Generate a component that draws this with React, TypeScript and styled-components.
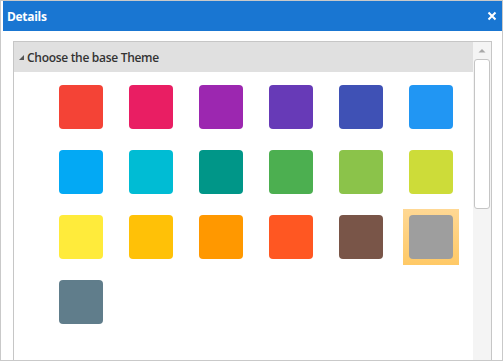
import React from "react";
import styled, { createGlobalStyle } from "styled-components";

const GlobalStyle = createGlobalStyle`
  html, body {
    margin: 0;
    padding: 0;
    background: #fff;
  }
  body {
    font-family: "Open Sans", "Liberation Sans", sans-serif;
  }
`;

const themes = [
  "#f44336", "#e91e63", "#9c27b0", "#673ab7", "#3f51b5", "#2196f3",
  "#03a9f4", "#00bcd4", "#009688", "#4caf50", "#8bc34a", "#cddc39",
  "#ffeb3b", "#ffc107", "#ff9800", "#ff5722", "#795548", "#9e9e9e",
  "#607d8b",
];

const selectedTheme = "#9e9e9e";

const Window = styled.div`
  width: 503px;
  height: 361px;
  box-sizing: border-box;
  border: 1px solid #c9c9c9;
  background: #fff;
  display: flex;
  flex-direction: column;
  overflow: hidden;
`;

const TitleBar = styled.div`
  height: 30px;
  flex: none;
  margin-left: 2px;
  padding: 0 5px 0 4px;
  background: #1976d2;
  color: #fff;
  display: flex;
  align-items: center;
  justify-content: space-between;
`;

const Title = styled.span`
  font-size: 12px;
  font-weight: 700;
  letter-spacing: -0.3px;
`;

const CloseButton = styled.button`
  border: 0;
  padding: 0;
  background: transparent;
  width: 10px;
  height: 10px;
  display: flex;
  cursor: pointer;
`;

const Body = styled.div`
  flex: 1;
  padding: 10px 10px 0 12px;
  display: flex;
  min-height: 0;
`;

const Panel = styled.div`
  flex: 1;
  border: 1px solid #c6c6c6;
  border-bottom: none;
  display: flex;
  min-height: 0;
`;

const Content = styled.div`
  flex: 1;
  display: flex;
  flex-direction: column;
`;

const SectionHeader = styled.div`
  height: 30px;
  background: #e0e0e0;
  display: flex;
  align-items: center;
  gap: 2px;
  padding-left: 4px;
  color: #333;
  font-size: 12px;
  font-weight: 600;
  letter-spacing: -0.3px;
`;

const SwatchGrid = styled.div`
  display: grid;
  grid-template-columns: repeat(6, 56px);
  column-gap: 14px;
  row-gap: 9px;
  padding: 7px 0 0 39px;
`;

const SwatchCell = styled.div<{ $selected: boolean }>`
  width: 56px;
  height: 56px;
  box-sizing: border-box;
  padding: 6px;
  background: ${(p) =>
    p.$selected ? "linear-gradient(#ffd894, #ffc966)" : "transparent"};
`;

const Swatch = styled.div<{ $color: string }>`
  width: 44px;
  height: 44px;
  border-radius: 4px;
  background: ${(p) => p.$color};
`;

const ScrollBar = styled.div`
  width: 18px;
  flex: none;
  background: #f4f4f4;
  display: flex;
  flex-direction: column;
  align-items: center;
`;

const ScrollArrow = styled.div`
  height: 17px;
  width: 100%;
  display: flex;
  align-items: center;
  justify-content: center;
  background: #f4f4f4;
`;

const ScrollThumb = styled.div`
  width: 16px;
  height: 150px;
  box-sizing: border-box;
  border: 1px solid #c5c5c5;
  border-radius: 3px;
  background: #fff;
`;

export default function App() {
  return (
    <>
      <GlobalStyle />
      <Window>
        <TitleBar>
          <Title>Details</Title>
          <CloseButton aria-label="close">
            <svg width="10" height="10" viewBox="0 0 10 10">
              <path
                d="M1.5 1.5 L8.5 8.5 M8.5 1.5 L1.5 8.5"
                stroke="#fff"
                strokeWidth="2"
              />
            </svg>
          </CloseButton>
        </TitleBar>
        <Body>
          <Panel>
            <Content>
              <SectionHeader>
                <svg width="7" height="7" viewBox="0 0 7 7">
                  <polygon points="6,1 6,6 1,6" fill="#555" />
                </svg>
                Choose the base Theme
              </SectionHeader>
              <SwatchGrid>
                {themes.map((c) => (
                  <SwatchCell key={c} $selected={c === selectedTheme}>
                    <Swatch $color={c} />
                  </SwatchCell>
                ))}
              </SwatchGrid>
            </Content>
            <ScrollBar>
              <ScrollArrow>
                <svg width="8" height="5" viewBox="0 0 8 5">
                  <polygon points="0.5,4.5 4,1 7.5,4.5" fill="#a8a8a8" />
                </svg>
              </ScrollArrow>
              <ScrollThumb />
            </ScrollBar>
          </Panel>
        </Body>
      </Window>
    </>
  );
}
